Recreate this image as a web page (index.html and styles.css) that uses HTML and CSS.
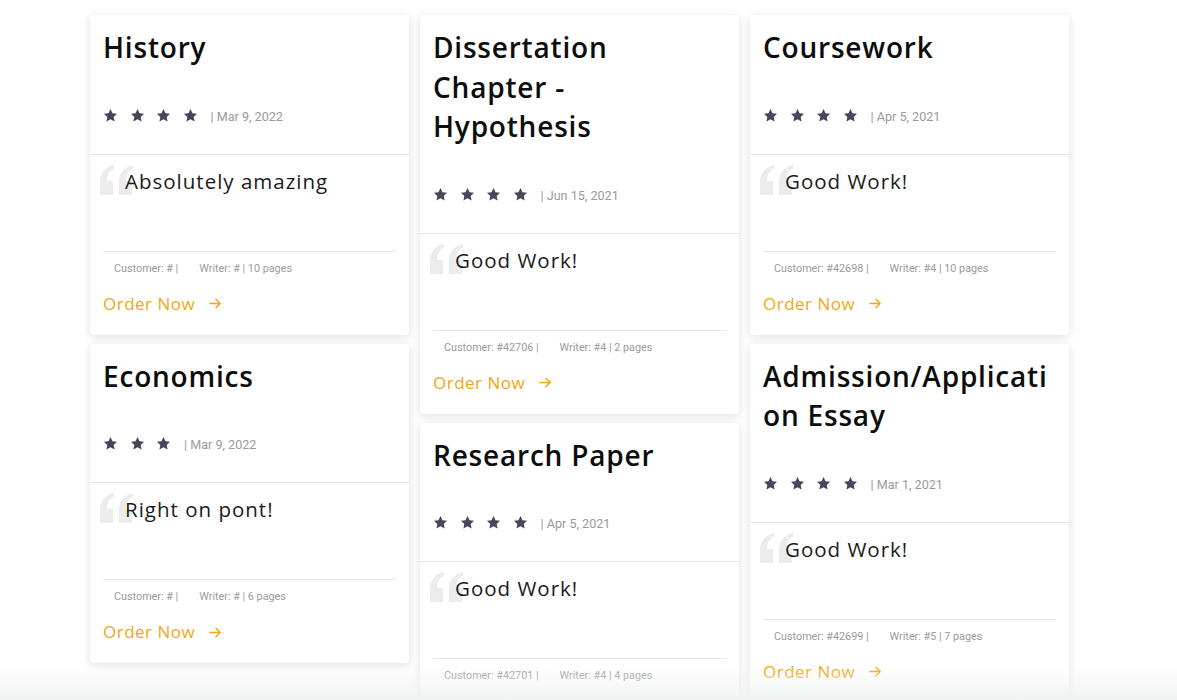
FILE: index.html
```html
<!DOCTYPE html>
<html lang="en">
<head>
<meta charset="utf-8">
<title>Reviews</title>
<link rel="stylesheet" href="styles.css">
</head>
<body>
<svg width="0" height="0" class="defs" aria-hidden="true">
  <defs>
    <symbol id="star" viewBox="0 0 24 24"><path d="M12 1.5l3.2 6.9 7.3.8-5.4 5 1.5 7.4L12 17.9l-6.6 3.7 1.5-7.4-5.4-5 7.3-.8z"/></symbol>
    <symbol id="arrow" viewBox="0 0 14 14"><path d="M1 7h11M7.5 2.5L12 7l-4.5 4.5" fill="none" stroke="currentColor" stroke-width="1.6" stroke-linecap="round" stroke-linejoin="round"/></symbol>
    <symbol id="qm" viewBox="0 0 36 30"><path d="M15 0C6 2 1 8 1 17v13h13V16H8c0-6 2-10 7-12z"/><path d="M34 0c-9 2-14 8-14 17v13h13V16h-6c0-6 2-10 7-12z"/></symbol>
  </defs>
</svg>

<main class="board">
  <section class="col">
    <article class="card">
      <header class="card-head">
        <h2 class="card-title">History</h2>
        <div class="rating">
          <span class="stars"><svg><use href="#star"/></svg><svg><use href="#star"/></svg><svg><use href="#star"/></svg><svg><use href="#star"/></svg></span>
          <span class="date">| Mar 9, 2022</span>
        </div>
      </header>
      <div class="card-body">
        <blockquote class="quote"><svg class="qmark"><use href="#qm"/></svg><p>Absolutely amazing</p></blockquote>
        <div class="meta"><span>Customer: # |</span><span>Writer: # | 10 pages</span></div>
        <a class="order" href="#">Order Now <svg class="arrow"><use href="#arrow"/></svg></a>
      </div>
    </article>
    <article class="card">
      <header class="card-head">
        <h2 class="card-title">Economics</h2>
        <div class="rating">
          <span class="stars"><svg><use href="#star"/></svg><svg><use href="#star"/></svg><svg><use href="#star"/></svg></span>
          <span class="date">| Mar 9, 2022</span>
        </div>
      </header>
      <div class="card-body">
        <blockquote class="quote"><svg class="qmark"><use href="#qm"/></svg><p>Right on pont!</p></blockquote>
        <div class="meta"><span>Customer: # |</span><span>Writer: # | 6 pages</span></div>
        <a class="order" href="#">Order Now <svg class="arrow"><use href="#arrow"/></svg></a>
      </div>
    </article>
  </section>

  <section class="col col-clipped">
    <article class="card">
      <header class="card-head">
        <h2 class="card-title">Dissertation Chapter - Hypothesis</h2>
        <div class="rating">
          <span class="stars"><svg><use href="#star"/></svg><svg><use href="#star"/></svg><svg><use href="#star"/></svg><svg><use href="#star"/></svg></span>
          <span class="date">| Jun 15, 2021</span>
        </div>
      </header>
      <div class="card-body">
        <blockquote class="quote"><svg class="qmark"><use href="#qm"/></svg><p>Good Work!</p></blockquote>
        <div class="meta"><span>Customer: #42706 |</span><span>Writer: #4 | 2 pages</span></div>
        <a class="order" href="#">Order Now <svg class="arrow"><use href="#arrow"/></svg></a>
      </div>
    </article>
    <article class="card">
      <header class="card-head">
        <h2 class="card-title">Research Paper</h2>
        <div class="rating">
          <span class="stars"><svg><use href="#star"/></svg><svg><use href="#star"/></svg><svg><use href="#star"/></svg><svg><use href="#star"/></svg></span>
          <span class="date">| Apr 5, 2021</span>
        </div>
      </header>
      <div class="card-body">
        <blockquote class="quote"><svg class="qmark"><use href="#qm"/></svg><p>Good Work!</p></blockquote>
        <div class="meta"><span>Customer: #42701 |</span><span>Writer: #4 | 4 pages</span></div>
        <a class="order" href="#">Order Now <svg class="arrow"><use href="#arrow"/></svg></a>
      </div>
    </article>
  </section>

  <section class="col col-clipped">
    <article class="card">
      <header class="card-head">
        <h2 class="card-title">Coursework</h2>
        <div class="rating">
          <span class="stars"><svg><use href="#star"/></svg><svg><use href="#star"/></svg><svg><use href="#star"/></svg><svg><use href="#star"/></svg></span>
          <span class="date">| Apr 5, 2021</span>
        </div>
      </header>
      <div class="card-body">
        <blockquote class="quote"><svg class="qmark"><use href="#qm"/></svg><p>Good Work!</p></blockquote>
        <div class="meta"><span>Customer: #42698 |</span><span>Writer: #4 | 10 pages</span></div>
        <a class="order" href="#">Order Now <svg class="arrow"><use href="#arrow"/></svg></a>
      </div>
    </article>
    <article class="card">
      <header class="card-head">
        <h2 class="card-title">Admission/Application Essay</h2>
        <div class="rating">
          <span class="stars"><svg><use href="#star"/></svg><svg><use href="#star"/></svg><svg><use href="#star"/></svg><svg><use href="#star"/></svg></span>
          <span class="date">| Mar 1, 2021</span>
        </div>
      </header>
      <div class="card-body">
        <blockquote class="quote"><svg class="qmark"><use href="#qm"/></svg><p>Good Work!</p></blockquote>
        <div class="meta"><span>Customer: #42699 |</span><span>Writer: #5 | 7 pages</span></div>
        <a class="order" href="#">Order Now <svg class="arrow"><use href="#arrow"/></svg></a>
      </div>
    </article>
  </section>
</main>
<div class="fade"></div>
</body>
</html>
```

FILE: styles.css
```css
html, body {
  margin: 0;
  height: 700px;
  overflow: hidden;
  background: #ffffff;
}

body {
  font-family: "Open Sans", "Noto Sans", sans-serif;
  color: #111;
}

.defs {
  position: absolute;
  width: 0;
  height: 0;
}

.board {
  display: grid;
  grid-template-columns: repeat(3, 319px);
  column-gap: 11px;
  align-items: start;
  padding: 15px 0 0 90px;
}

.col {
  display: flex;
  flex-direction: column;
  gap: 9px;
}

.card {
  background: #fff;
  border-radius: 4px;
  box-shadow: 0 2px 10px rgba(0, 0, 0, 0.13);
}

.col-clipped .card:first-child {
  border-top-left-radius: 0;
  border-top-right-radius: 0;
}

.card-head {
  padding: 13px 13px 31px;
  border-bottom: 1px solid #e4e4e4;
}

.card-title {
  margin: 0 0 40px;
  font-size: 28px;
  line-height: 39.5px;
  font-weight: 600;
  letter-spacing: 0.8px;
  color: #0d0d0d;
  overflow-wrap: anywhere;
}

.rating {
  display: flex;
  align-items: center;
  height: 15px;
}

.stars {
  display: flex;
  gap: 11.5px;
}

.stars svg {
  width: 15px;
  height: 15px;
  fill: #45475a;
}

.date {
  margin-left: 13px;
  padding-top: 2px;
  font-family: Roboto, "Liberation Sans", sans-serif;
  font-size: 12.6px;
  color: #9a9a9a;
}

.card-body {
  padding: 11px 13px 19px;
}

.quote {
  position: relative;
  margin: 0;
  padding: 0 0 55px;
  border-bottom: 1px solid #e6e6e6;
}

.quote p {
  position: relative;
  margin: 0;
  padding-left: 22px;
  font-size: 20.5px;
  line-height: 30px;
  font-weight: 500;
  letter-spacing: 1px;
  color: #1a1a1a;
}

.qmark {
  position: absolute;
  left: -4px;
  top: -1px;
  width: 36px;
  height: 30px;
  fill: #ececec;
}

.meta {
  display: flex;
  gap: 21px;
  margin-top: 9px;
  padding-left: 11px;
  font-family: Roboto, "Liberation Sans", sans-serif;
  font-size: 10.8px;
  line-height: 16px;
  color: #9b9b9b;
}

.order {
  display: flex;
  align-items: center;
  gap: 14px;
  margin-top: 15px;
  font-size: 17px;
  line-height: 24px;
  font-weight: 500;
  letter-spacing: 0.5px;
  color: #f3a614;
  text-decoration: none;
}

.arrow {
  width: 13px;
  height: 13px;
  color: #f3a614;
}

.fade {
  position: fixed;
  left: 0;
  right: 0;
  bottom: 0;
  height: 34px;
  background: linear-gradient(rgba(242, 243, 243, 0), rgba(241, 242, 242, 1));
  pointer-events: none;
}
```
